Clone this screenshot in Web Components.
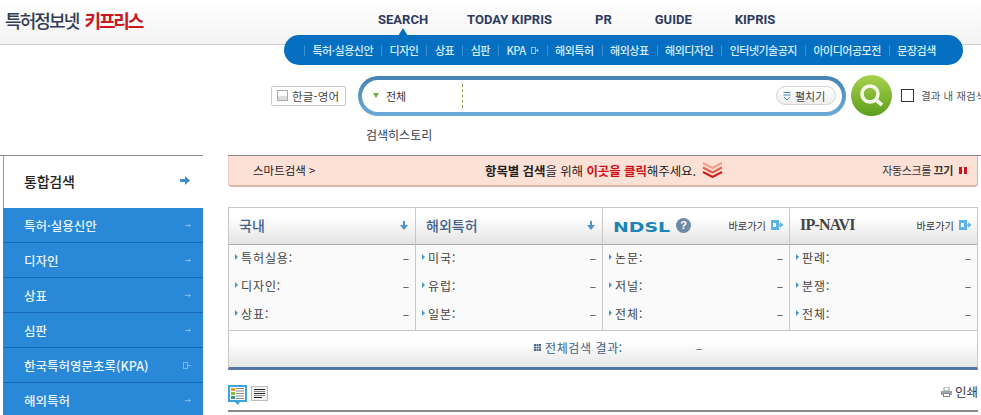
<!DOCTYPE html>
<html lang="ko">
<head>
<meta charset="utf-8">
<title>특허정보넷 키프리스</title>
<style>
  html, body { margin: 0; height: 415px; overflow: hidden; background: #fff; }
  body { font-family: "Noto Sans CJK KR", "Liberation Sans", sans-serif; }
</style>
</head>
<body>
<kp-header></kp-header>
<kp-subnav></kp-subnav>
<kp-search></kp-search>
<kp-main>
  <kp-sidebar slot="side"></kp-sidebar>
  <kp-smartbar></kp-smartbar>
  <kp-stats>
    <kp-stat-col label="국내" rows="특허실용:,디자인:,상표:"></kp-stat-col>
    <kp-stat-col label="해외특허" rows="미국:,유럽:,일본:"></kp-stat-col>
    <kp-stat-col logo="ndsl" rows="논문:,저널:,전체:"></kp-stat-col>
    <kp-stat-col logo="ipnavi" rows="판례:,분쟁:,전체:"></kp-stat-col>
  </kp-stats>
  <kp-toolbar></kp-toolbar>
</kp-main>

<script>
const KR = '"Noto Sans CJK KR", "Liberation Sans", sans-serif';

class KpHeader extends HTMLElement {
  constructor() {
    super();
    this.attachShadow({ mode: 'open' });
  }
  connectedCallback() {
    const items = ['SEARCH', 'TODAY KIPRIS', 'PR', 'GUIDE', 'KIPRIS'];
    this.shadowRoot.innerHTML = `
      <style>
        :host {
          display: flex;
          align-items: center;
          height: 44px;
          background: linear-gradient(#fff, #f3f3f3);
          border-bottom: 1px solid #ccc;
          font-family: ${KR};
        }
        .logo {
          width: 378px;
          padding-left: 5px;
          box-sizing: border-box;
          font-size: 18px;
          font-weight: 500;
          letter-spacing: -1.9px;
          color: #333d50;
          white-space: nowrap;
          margin-top: -4px;
        }
        .logo b { color: #c9161f; font-weight: 700; margin-left: 3px; letter-spacing: -2.1px; }
        nav { display: flex; gap: 43px; margin-top: -4px; }
        a {
          font: 700 13px/16px Roboto, sans-serif;
          color: #2d3a5e;
          text-decoration: none;
          white-space: nowrap;
          position: relative;
        }
        .on { margin-right: -4px; }
        .on::after {
          content: "";
          position: absolute;
          left: 20px;
          top: 16px;
          border: 5px solid transparent;
          border-top: 0;
          border-bottom: 8px solid #0570c2;
        }
      </style>
      <div class="logo">특허정보넷 <b>키프리스</b></div>
      <nav>${items.map((t, i) => `<a class="${i === 0 ? 'on' : ''}" href="#">${t}</a>`).join('')}</nav>
    `;
  }
}

class KpSubnav extends HTMLElement {
  constructor() {
    super();
    this.attachShadow({ mode: 'open' });
  }
  connectedCallback() {
    const items = ['특허·실용신안', '디자인', '상표', '심판', 'KPA', '해외특허', '해외상표', '해외디자인', '인터넷기술공지', '아이디어공모전', '문장검색'];
    this.shadowRoot.innerHTML = `
      <style>
        :host {
          display: flex;
          align-items: center;
          box-sizing: border-box;
          width: 679px;
          height: 30px;
          margin: -10px 0 0 284px;
          padding-left: 20px;
          background: #0570c2;
          border-radius: 15px;
          position: relative;
          font-family: ${KR};
        }
        a {
          display: flex;
          align-items: center;
          gap: 5px;
          height: 11px;
          padding: 0 8px 0 7.5px;
          color: #d8eefc;
          font-size: 11px;
          font-weight: 500;
          letter-spacing: -0.5px;
          line-height: 11px;
          text-decoration: none;
          white-space: nowrap;
          border-left: 1px solid #3a8fd2;
        }
        a:first-child { border-left: 0; }
        svg { display: block; }
      </style>
      ${items.map(t => `<a href="#">${t}${t === 'KPA' ? `<svg width="8" height="7" viewBox="0 0 8 7"><rect x=".5" y=".5" width="4" height="6" fill="none" stroke="#8cc4ec"/><path d="M5 3.5h2M6 2l1.5 1.5L6 5" fill="none" stroke="#8cc4ec"/></svg>` : ''}</a>`).join('')}
    `;
  }
}

class KpSearch extends HTMLElement {
  constructor() {
    super();
    this.attachShadow({ mode: 'open' });
  }
  connectedCallback() {
    this.shadowRoot.innerHTML = `
      <style>
        :host {
          display: block;
          height: 90px;
          box-sizing: border-box;
          padding: 10px 0 0 271px;
          font-family: ${KR};
          color: #333;
        }
        .row { display: flex; align-items: center; height: 41px; }
        .row > * { flex: none; }
        .lang {
          display: flex;
          align-items: center;
          gap: 4px;
          box-sizing: border-box;
          width: 75px;
          height: 20px;
          padding-left: 5px;
          border: 1px solid #ccc;
          border-radius: 2px;
          font-size: 11.5px;
          letter-spacing: 0.2px;
          color: #444;
          white-space: nowrap;
        }
        .lang i {
          width: 9px;
          height: 9px;
          border: 1px solid #aaa;
          background: linear-gradient(#fff 50%, #ddd 50%);
        }
        .box {
          margin-left: 12px;
          width: 488px;
          height: 40px;
          box-sizing: border-box;
          padding: 4px;
          border-radius: 20px;
          background: linear-gradient(#4583b2, #6cabd9);
        }
        .inner {
          display: flex;
          align-items: center;
          height: 32px;
          background: #fff;
          border-radius: 16px;
        }
        .tri {
          margin-left: 11px;
          border: 3.5px solid transparent;
          border-bottom: 0;
          border-top: 5px solid #7da845;
        }
        .all { flex: none; margin-left: 7px; width: 76px; font-size: 11px; color: #333; }
        .dash { height: 24px; border-left: 1px dashed #8aaa55; }
        .more {
          display: flex;
          align-items: center;
          gap: 4px;
          box-sizing: border-box;
          width: 60px;
          height: 19px;
          margin-left: auto;
          margin-right: 6px;
          padding-left: 6px;
          background: linear-gradient(#fff, #eee);
          border: 1px solid #d4d4d4;
          border-radius: 10px;
          font-size: 11px;
          color: #444;
          white-space: nowrap;
        }
        .go { margin-left: 5px; display: block; }
        .re {
          display: flex;
          align-items: center;
          margin-left: 9px;
          font-size: 10.5px;
          color: #555;
          white-space: nowrap;
          letter-spacing: 0.1px;
        }
        .re i {
          width: 11px;
          height: 11px;
          margin-right: 7px;
          border: 1px solid #333;
        }
        .hist {
          margin: 11px 0 0 95px;
          font-size: 12px;
          line-height: 16px;
          color: #333c50;
        }
      </style>
      <div class="row">
        <div class="lang"><i></i>한글-영어</div>
        <div class="box">
          <div class="inner">
            <span class="tri"></span>
            <span class="all">전체</span>
            <span class="dash"></span>
            <span class="more">
              <svg width="8" height="10" viewBox="0 0 8 10"><path d="M.5 1.5h7M.5 4h7" stroke="#4a86c4" fill="none"/><path d="M1 6l3 3 3-3" stroke="#4a86c4" fill="none"/></svg>
              펼치기
            </span>
          </div>
        </div>
        <svg class="go" width="41" height="41" viewBox="0 0 41 41">
          <defs><linearGradient id="g" x1="0" y1="0" x2="0" y2="1"><stop offset="0" stop-color="#a9d24e"/><stop offset="1" stop-color="#5d9e1c"/></linearGradient></defs>
          <circle cx="20.5" cy="20.5" r="20.5" fill="url(#g)"/>
          <circle cx="19" cy="19" r="8" fill="none" stroke="#f4f9ea" stroke-width="3.6"/>
          <path d="M25 25l6 5" stroke="#f4f9ea" stroke-width="3.6"/>
        </svg>
        <label class="re"><i></i>결과 내 재검색</label>
      </div>
      <div class="hist">검색히스토리</div>
    `;
  }
}

class KpMain extends HTMLElement {
  constructor() {
    super();
    this.attachShadow({ mode: 'open' });
  }
  connectedCallback() {
    this.shadowRoot.innerHTML = `
      <style>
        :host { display: grid; grid-template-columns: 203px 1fr; gap: 25px; height: 260px; overflow: hidden; }
        .right { display: block; padding-right: 3px; border-top: 1px solid #8a8a8a; }
      </style>
      <slot name="side"></slot>
      <div class="right"><slot></slot></div>
    `;
  }
}

class KpSidebar extends HTMLElement {
  constructor() {
    super();
    this.attachShadow({ mode: 'open' });
  }
  connectedCallback() {
    const items = ['특허·실용신안', '디자인', '상표', '심판', '한국특허영문초록(KPA)', '해외특허'];
    this.shadowRoot.innerHTML = `
      <style>
        :host {
          display: block;
          padding-left: 3px;
          border-top: 1px solid #8a8a8a;
          font-family: ${KR};
        }
        .active {
          display: flex;
          align-items: center;
          justify-content: space-between;
          box-sizing: border-box;
          height: 52px;
          padding: 0 13px 3px 20px;
          border-left: 1px solid #999;
          font-size: 14px;
          font-weight: 500;
          letter-spacing: -0.2px;
          color: #222;
        }
        .item {
          display: flex;
          align-items: center;
          justify-content: space-between;
          box-sizing: border-box;
          height: 35px;
          padding: 0 12px 0 21px;
          background: #2a88d8;
          border-bottom: 1px solid #1769b8;
          font-size: 12.5px;
          font-weight: 500;
          color: #e8f5ff;
          white-space: nowrap;
        }
        .item:first-of-type { border-top: 1px solid #1769b8; height: 36px; }
        svg { display: block; flex: none; }
      </style>
      <div class="active">통합검색
        <svg width="10" height="9" viewBox="0 0 10 9"><path d="M0 3h5V0l5 4.5L5 9V6H0z" fill="#3d8fd0"/></svg>
      </div>
      ${items.map(t => `<div class="item">${t}${t.includes('KPA')
        ? `<svg width="8" height="7" viewBox="0 0 8 7"><rect x=".5" y=".5" width="4" height="6" fill="none" stroke="#7cb9e8"/><path d="M5 3.5h3" stroke="#7cb9e8"/></svg>`
        : `<svg width="6" height="5" viewBox="0 0 6 5"><path d="M0 2.5h5M3.5 1L5.5 2.5 3.5 4" fill="none" stroke="#7cb9e8"/></svg>`}</div>`).join('')}
    `;
  }
}

class KpSmartbar extends HTMLElement {
  constructor() {
    super();
    this.attachShadow({ mode: 'open' });
  }
  connectedCallback() {
    this.shadowRoot.innerHTML = `
      <style>
        :host {
          display: grid;
          grid-template-columns: 232px 1fr auto;
          align-items: center;
          box-sizing: border-box;
          height: 31px;
          padding: 0 10px 1px 24px;
          background: #fde1d6;
          border-bottom: 2px solid #dcb6a6;
          border-left: 1px solid #eccabc;
          border-right: 1px solid #dcb6a6;
          border-radius: 0 0 4px 4px;
          font-family: ${KR};
          font-size: 11.5px;
          color: #222;
          white-space: nowrap;
        }
        .mid { display: flex; align-items: center; font-size: 12.5px; letter-spacing: -0.1px; }
        .mid b { font-weight: 700; }
        .mid em { font-style: normal; font-weight: 700; color: #d01218; }
        .mid svg { margin-left: 6px; }
        .auto { display: flex; align-items: center; gap: 6px; font-size: 11px; letter-spacing: -0.4px; color: #333; }
        .auto b { font-weight: 700; }
        .auto i { width: 2px; height: 7px; border-left: 3px solid #c8161c; border-right: 3px solid #c8161c; }
      </style>
      <div>스마트검색 &gt;</div>
      <div class="mid"><b>항목별 검색</b>을 위해&nbsp;<em>이곳을 클릭</em>해주세요.
        <svg width="21" height="16" viewBox="0 0 21 16"><path d="M1 1l9.500 5L20 1" fill="none" stroke="#f0a08c" stroke-width="2"/><path d="M1 5.500l9.500 5 9.500-5" fill="none" stroke="#e0604c" stroke-width="2"/><path d="M1 10l9.500 5 9.500-5" fill="none" stroke="#c8201c" stroke-width="2"/></svg>
      </div>
      <div class="auto"><span>자동스크롤 <b>끄기</b></span><i></i></div>
    `;
  }
}

class KpStats extends HTMLElement {
  constructor() {
    super();
    this.attachShadow({ mode: 'open' });
  }
  connectedCallback() {
    this.shadowRoot.innerHTML = `
      <style>
        :host {
          display: block;
          box-sizing: border-box;
          margin-top: 20px;
          border: 1px solid #c8c8c8;
          border-bottom: 3px solid #5577a5;
          font-family: ${KR};
        }
        .cols { display: grid; grid-template-columns: 186px 187px 187px 1fr; }
        .total {
          display: flex;
          align-items: center;
          box-sizing: border-box;
          height: 37px;
          padding: 0 0 4px 305px;
          border-top: 1px solid #c8c8c8;
          background: linear-gradient(#fff 30%, #e6e6e6);
          font-size: 12px;
          letter-spacing: 0.6px;
          color: #3f5f86;
        }
        .total svg { margin-right: 4px; }
        .total span:last-child { margin-left: 73px; }
      </style>
      <div class="cols"><slot></slot></div>
      <div class="total">
        <svg width="7" height="7" viewBox="0 0 7 7" fill="#4d6a8e"><rect width="2" height="2"/><rect x="2.500" width="2" height="2"/><rect x="5" width="2" height="2"/><rect y="2.500" width="2" height="2"/><rect x="2.500" y="2.500" width="2" height="2"/><rect x="5" y="2.500" width="2" height="2"/><rect y="5" width="2" height="2"/><rect x="2.500" y="5" width="2" height="2"/><rect x="5" y="5" width="2" height="2"/></svg>
        <span>전체검색 결과:</span><span>–</span>
      </div>
    `;
  }
}

class KpStatCol extends HTMLElement {
  constructor() {
    super();
    this.attachShadow({ mode: 'open' });
  }
  headInner() {
    const go = `<span class="go">바로가기<svg width="12" height="10" viewBox="0 0 12 10"><rect width="8" height="10" fill="#5cb3e6"/><rect x="2" y="3" width="3" height="4" fill="#fff"/><path d="M6 5h5M9 3l2.500 2L9 7" fill="none" stroke="#5cb3e6" stroke-width="1.5"/></svg></span>`;
    const logo = this.getAttribute('logo');
    if (logo === 'ndsl') {
      return `<span class="ndsl"><span>NDSL</span></span><span class="q">?</span>${go}`;
    }
    if (logo === 'ipnavi') {
      return `<span class="ipn">IP-NAVI</span>${go}`;
    }
    return `<span class="ttl">${this.getAttribute('label')}</span>
      <svg class="down" width="8" height="9" viewBox="0 0 8 9"><path d="M3 0h2v4h3L4 9 0 4h3z" fill="#4d94cc"/></svg>`;
  }
  connectedCallback() {
    const rows = this.getAttribute('rows').split(',');
    this.shadowRoot.innerHTML = `
      <style>
        :host { display: block; border-left: 1px solid #c8c8c8; font-family: ${KR}; }
        :host(:first-child) { border-left: 0; }
        .head {
          display: flex;
          align-items: center;
          box-sizing: border-box;
          height: 37px;
          padding: 0 6px 2px 10px;
          background: linear-gradient(#fff 25%, #e4e4e4);
          border-bottom: 1px solid #a8a8a8;
        }
        .ttl { font-size: 14px; font-weight: 500; color: #44618c; }
        .down { margin-left: auto; margin-right: 1px; }
        .ndsl { flex: none; width: 58px; }
        .ndsl span {
          display: inline-block;
          font: 700 14px/1 "DejaVu Sans", sans-serif;
          color: #1b84b8;
          transform: scaleX(1.35);
          transform-origin: left center;
        }
        .q {
          width: 15px;
          height: 15px;
          margin-left: 5px;
          border-radius: 50%;
          background: #6f8aa6;
          color: #fff;
          font: 700 11px/15px "Liberation Sans", sans-serif;
          text-align: center;
        }
        .ipn {
          font: 700 16px/1 "Liberation Serif", serif;
          letter-spacing: -0.8px;
          color: #444;
        }
        .go {
          display: flex;
          align-items: center;
          gap: 5px;
          margin-left: auto;
          font-size: 10.2px;
          color: #333;
          white-space: nowrap;
        }
        .body { padding: 0 0 1px; background: #fafafa; }
        .row {
          display: flex;
          align-items: center;
          box-sizing: border-box;
          height: 28px;
          padding: 0 5px 4px 6px;
          font-size: 12px;
          letter-spacing: 0.9px;
          color: #444;
        }
        .row i {
          margin-right: 3px;
          border: 3px solid transparent;
          border-right: 0;
          border-left: 3px solid #4d94cc;
        }
        .row span { margin-left: auto; }
      </style>
      <div class="head">${this.headInner()}</div>
      <div class="body">
        ${rows.map(r => `<div class="row"><i></i>${r}<span>–</span></div>`).join('')}
      </div>
    `;
  }
}

class KpToolbar extends HTMLElement {
  constructor() {
    super();
    this.attachShadow({ mode: 'open' });
  }
  connectedCallback() {
    this.shadowRoot.innerHTML = `
      <style>
        :host {
          display: flex;
          align-items: flex-start;
          gap: 4px;
          box-sizing: border-box;
          height: 42px;
          padding-top: 15px;
          border-bottom: 2px solid #888;
          font-family: ${KR};
        }
        .print {
          display: flex;
          align-items: center;
          gap: 3px;
          margin: -1px 0 0 auto;
          font-size: 12.5px;
          line-height: 16px;
          color: #333;
        }
        svg { display: block; }
      </style>
      <svg width="19" height="20" viewBox="0 0 19 20">
        <path d="M0 0h19v17h-7l-2.500 3L7 17H0z" fill="#3da5dc"/>
        <rect x="2" y="2" width="15" height="13" fill="#fff"/>
        <rect x="3" y="3" width="4" height="3" fill="#e8962c"/><rect x="3" y="7" width="4" height="3" fill="#8fbc3c"/><rect x="3" y="11" width="4" height="3" fill="#2a9a8c"/>
        <path d="M8 3.500h8M8 6h8M8 8.500h8M8 11h8M8 13.500h8" stroke="#888"/>
      </svg>
      <svg width="17" height="15" viewBox="0 0 17 15" style="margin-top:1px">
        <rect x=".5" y=".5" width="16" height="14" fill="#f4f4f4" stroke="#bbb"/>
        <path d="M3 3.500h11M3 7.500h11M3 11.500h8" stroke="#222"/>
        <path d="M3 5.500h11M3 9.500h11" stroke="#888"/>
      </svg>
      <div class="print">
        <svg width="11" height="10" viewBox="0 0 11 10"><rect x="3" y="0" width="5" height="4" fill="#fff" stroke="#999"/><rect x="0" y="4" width="11" height="4" fill="#9aa4ae"/><rect x="2.500" y="6.500" width="6" height="3" fill="#fff" stroke="#888"/></svg>
        인쇄
      </div>
    `;
  }
}

customElements.define('kp-header', KpHeader);
customElements.define('kp-subnav', KpSubnav);
customElements.define('kp-search', KpSearch);
customElements.define('kp-main', KpMain);
customElements.define('kp-sidebar', KpSidebar);
customElements.define('kp-smartbar', KpSmartbar);
customElements.define('kp-stats', KpStats);
customElements.define('kp-stat-col', KpStatCol);
customElements.define('kp-toolbar', KpToolbar);
</script>
</body>
</html>
